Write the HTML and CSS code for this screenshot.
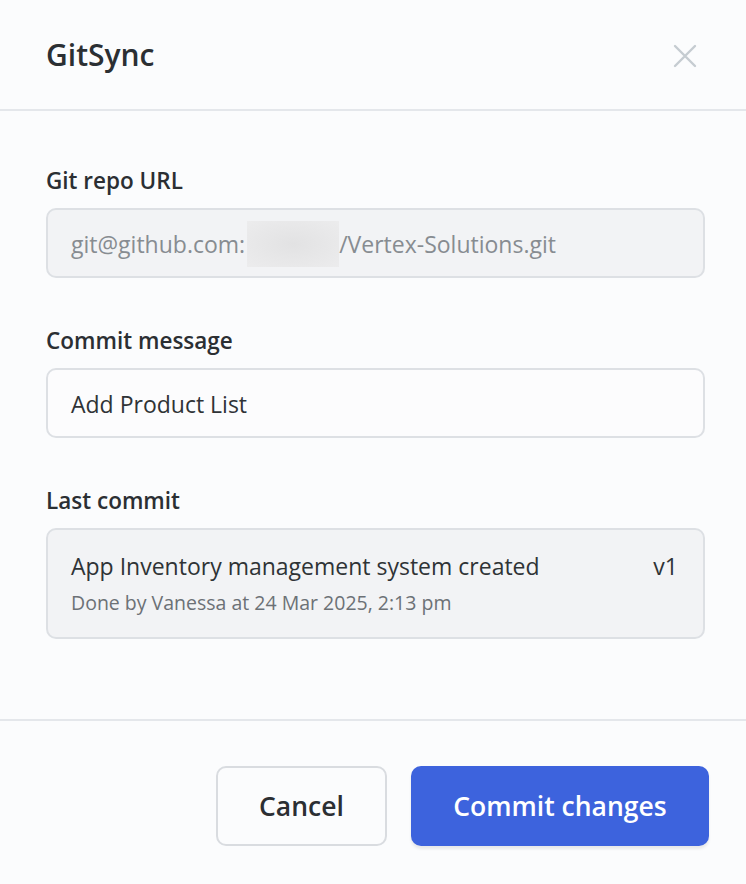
FILE: index.html
```html
<!DOCTYPE html>
<html lang="en">
<head>
<meta charset="utf-8">
<title>GitSync</title>
<link rel="stylesheet" href="styles.css">
</head>
<body>
<div class="modal">
  <header class="modal-header">
    <h1 class="title">GitSync</h1>
    <button class="close" aria-label="Close">
      <svg width="24" height="24" viewBox="0 0 24 24"><path d="M2 2 L22 22 M22 2 L2 22" stroke="#c5ccd1" stroke-width="2.4" stroke-linecap="round" fill="none"/></svg>
    </button>
  </header>
  <main class="modal-body">
    <div class="field">
      <label class="label">Git repo URL</label>
      <div class="input input-disabled"><span>git@github.com:</span><span class="blur"></span><span>/Vertex-Solutions.git</span></div>
    </div>
    <div class="field">
      <label class="label">Commit message</label>
      <div class="input">Add Product List</div>
    </div>
    <div class="field">
      <label class="label">Last commit</label>
      <div class="commit-box">
        <div class="commit-row">
          <span class="commit-msg">App Inventory management system created</span>
          <span class="commit-ver">v1</span>
        </div>
        <div class="commit-meta">Done by Vanessa at 24 Mar 2025, 2:13 pm</div>
      </div>
    </div>
  </main>
  <footer class="modal-footer">
    <button class="btn btn-secondary">Cancel</button>
    <button class="btn btn-primary">Commit changes</button>
  </footer>
</div>
</body>
</html>
```
FILE: styles.css
```css
* { box-sizing: border-box; }
html, body {
  margin: 0;
  padding: 0;
  background: #fbfcfd;
  font-family: "Open Sans", "Liberation Sans", sans-serif;
  color: #2b2f33;
}
.modal {
  width: 746px;
  height: 884px;
  display: flex;
  flex-direction: column;
}
.modal-header {
  height: 111px;
  border-bottom: 2px solid #e4e7eb;
  display: flex;
  align-items: center;
  justify-content: space-between;
  padding: 0 49px 0 46px;
}
.title {
  margin: 0;
  font-size: 30px;
  font-weight: 600;
  line-height: 40px;
  color: #2b2f33;
}
.close {
  background: none;
  border: 0;
  padding: 0;
  width: 24px;
  height: 24px;
  margin-top: 2px;
}
.modal-body {
  padding: 56px 41px 0 46px;
  height: 610px;
  border-bottom: 2px solid #e4e7eb;
  display: flex;
  flex-direction: column;
  gap: 49px;
}
.field {
  display: flex;
  flex-direction: column;
  gap: 13px;
}
.label {
  font-size: 22.5px;
  font-weight: 600;
  line-height: 28px;
  color: #2b2f33;
}
.input {
  height: 70px;
  flex-shrink: 0;
  border: 2px solid #dde0e4;
  border-radius: 10px;
  background: #fcfcfd;
  padding: 2px 23px 0;
  display: flex;
  align-items: center;
  font-size: 23px;
  color: #2f3336;
}
.input-disabled {
  background: #f2f3f5;
  color: #878c91;
}
.blur {
  display: inline-block;
  width: 92px;
  height: 46px;
  margin-left: 2px;
  background: radial-gradient(ellipse at center, #e2e2e3 0%, #e8e8e9 60%, #ececed 100%);
}
.commit-box {
  height: 111px;
  flex-shrink: 0;
  border: 2px solid #dde0e4;
  border-radius: 10px;
  background: #f2f3f5;
  padding: 22px 25px 0 23px;
}
.commit-row {
  display: flex;
  justify-content: space-between;
  font-size: 23px;
  line-height: 28px;
  color: #2f3336;
}
.commit-meta {
  margin-top: 10px;
  font-size: 19.5px;
  line-height: 26px;
  color: #6c7176;
}
.modal-footer {
  flex: 1;
  display: flex;
  justify-content: flex-end;
  align-items: flex-start;
  gap: 24px;
  padding: 45px 37px 0 0;
}
.btn {
  height: 80px;
  border-radius: 10px;
  font-family: inherit;
  font-size: 26.5px;
  font-weight: 600;
  cursor: pointer;
}
.btn-secondary {
  width: 171px;
  background: #fbfcfd;
  border: 2px solid #d9dce0;
  color: #2b2f33;
}
.btn-primary {
  width: 298px;
  background: #3d63dd;
  border: 0;
  color: #ffffff;
  box-shadow: 0 3px 3px rgba(0,0,0,0.08);
}
```
